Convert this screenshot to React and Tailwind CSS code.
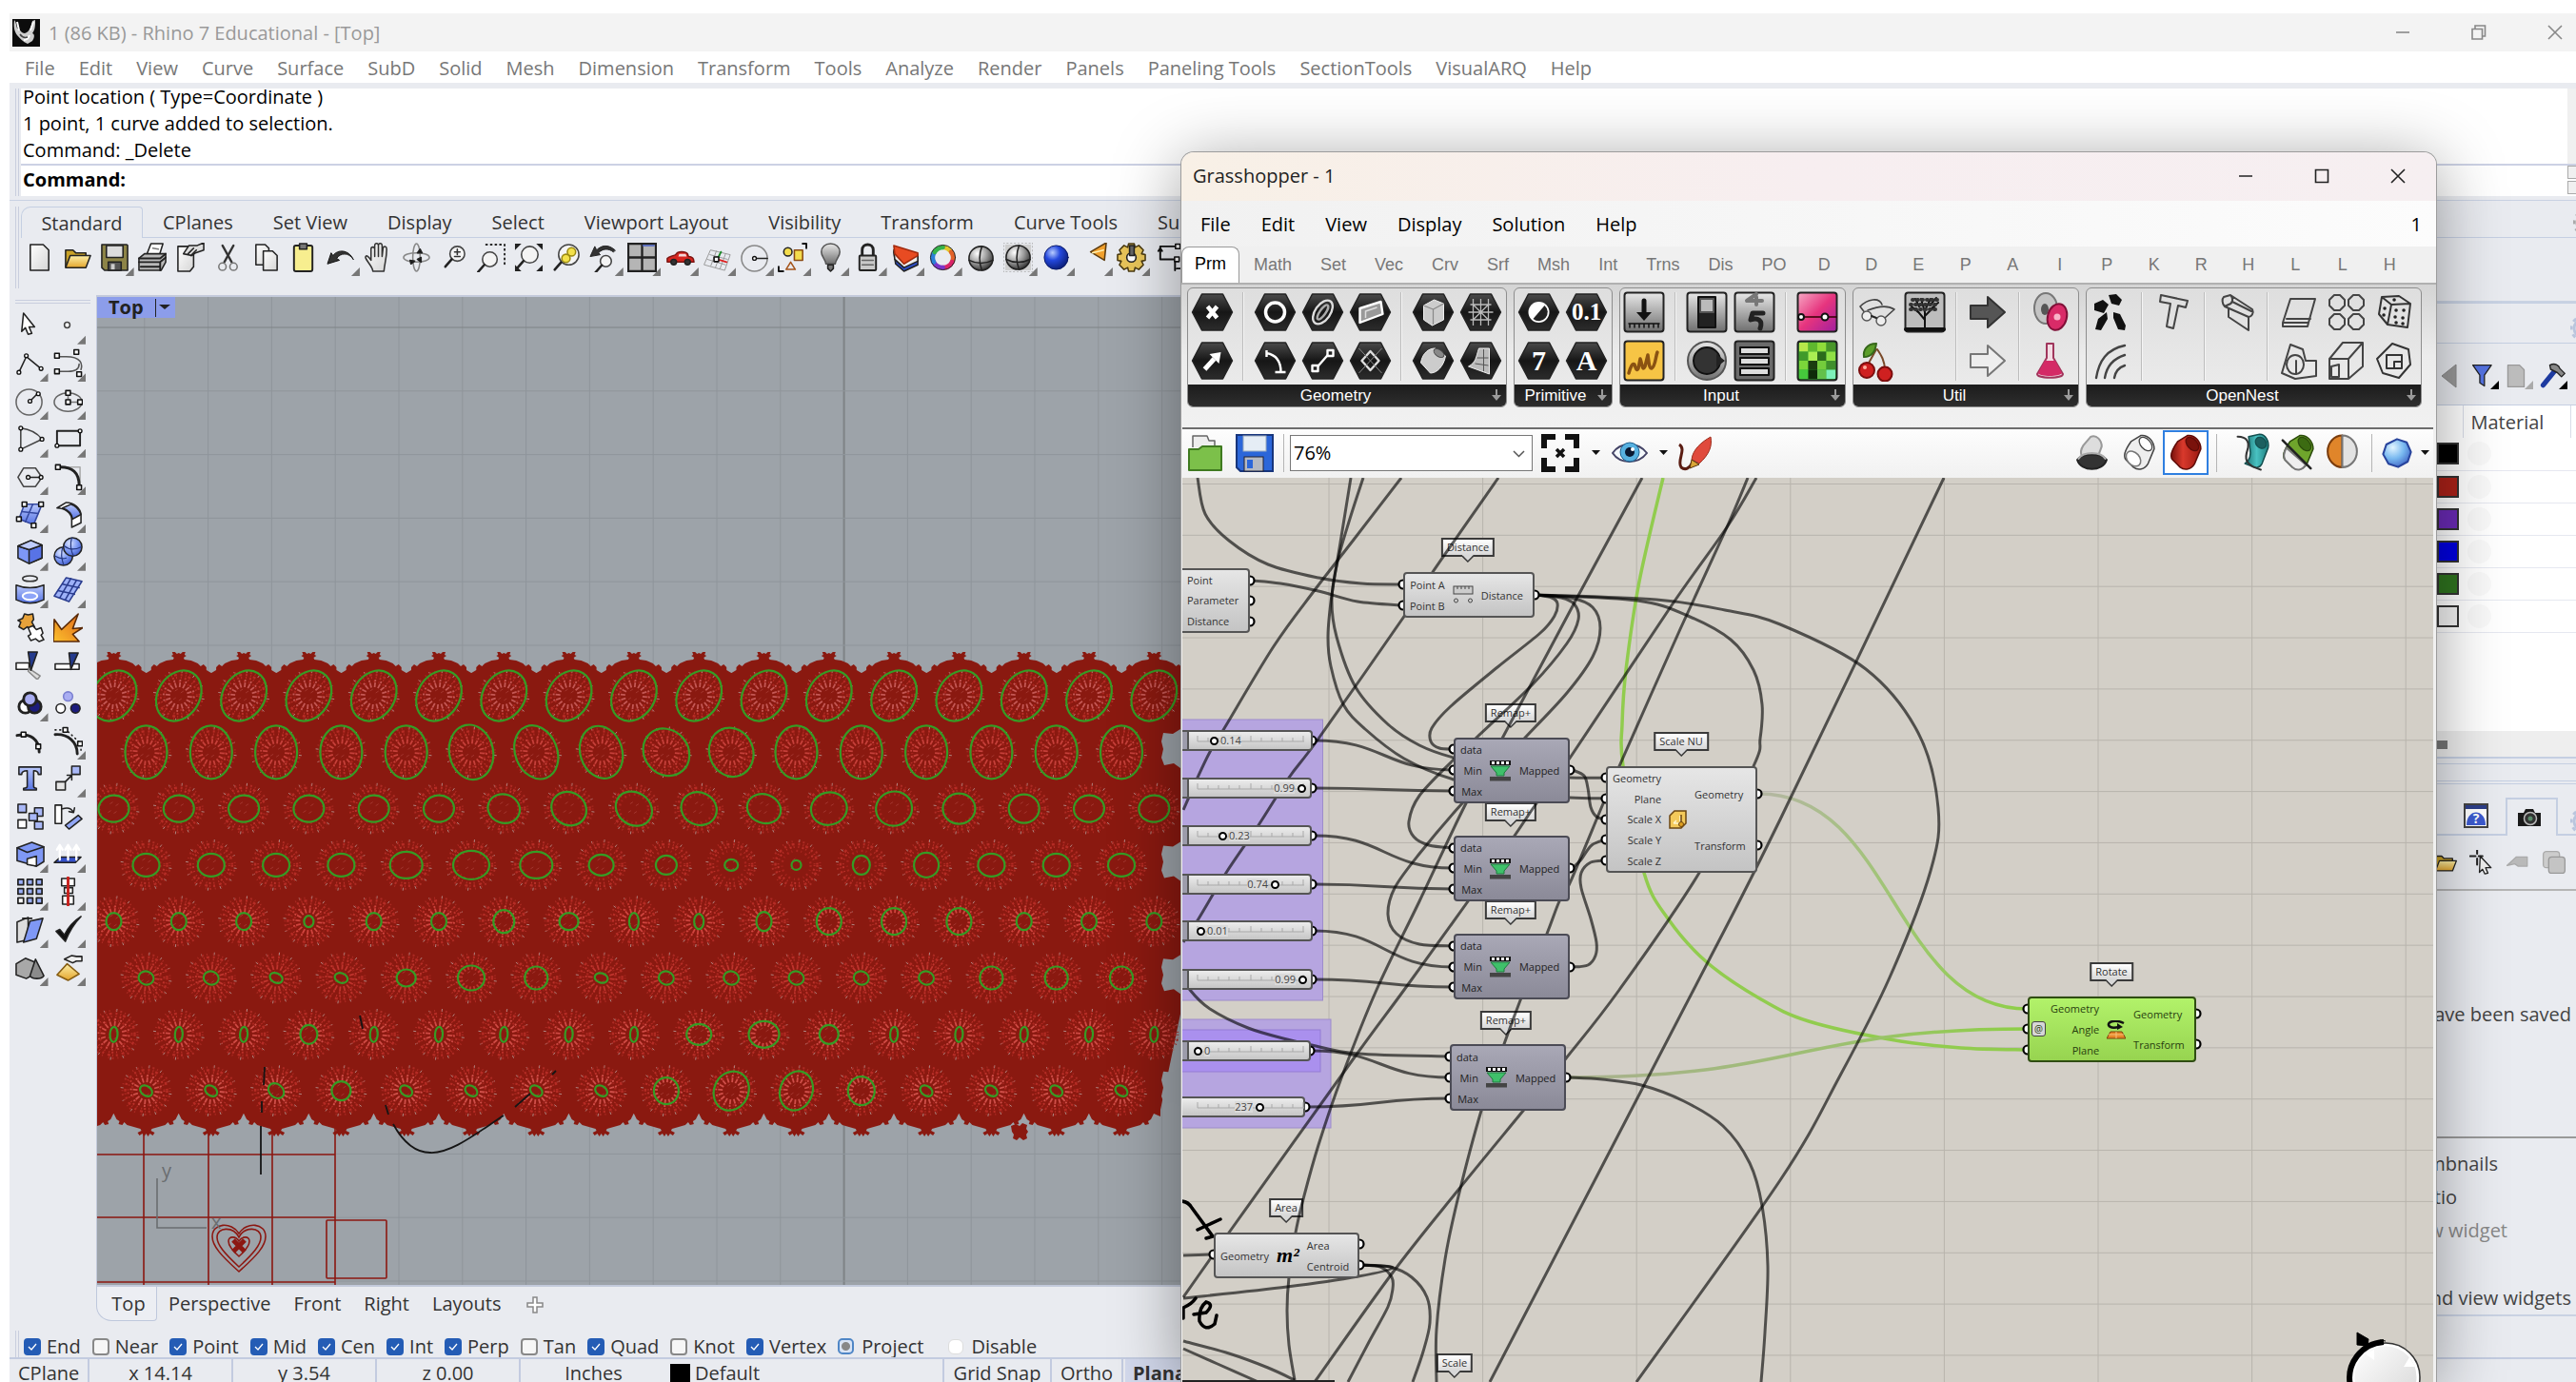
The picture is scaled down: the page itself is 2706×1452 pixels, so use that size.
import React from "react";

/* ---------- shared drawing helpers ---------- */

const smooth = (p) => {
  let d = `M${p[0][0]} ${p[0][1]}`;
  for (let i = 0; i < p.length - 1; i++) {
    const a = p[i - 1] || p[i];
    const b = p[i];
    const c = p[i + 1];
    const e = p[i + 2] || c;
    d += ` C${b[0] + (c[0] - a[0]) / 6} ${b[1] + (c[1] - a[1]) / 6} ${c[0] - (e[0] - b[0]) / 6} ${c[1] - (e[1] - b[1]) / 6} ${c[0]} ${c[1]}`;
  }
  return d;
};

const link = (x1, y1, x2, y2) => {
  const m = (x1 + x2) / 2;
  return `M${x1} ${y1} C${m} ${y1} ${m} ${y2} ${x2} ${y2}`;
};

const Svg = ({ s = 31, vb = 32, children }) => (
  <svg width={s} height={s} viewBox={`0 0 ${vb} ${vb}`} fill="none" stroke="#222" strokeWidth="1.6" strokeLinejoin="round" strokeLinecap="round" aria-hidden="true">
    {children}
  </svg>
);

const Sq = ({ x, y, f = "#fff" }) => <rect x={x - 2.5} y={y - 2.5} width="5" height="5" fill={f} stroke="#111" strokeWidth="1.6" />;
const Dot = ({ x, y }) => <circle cx={x} cy={y} r="2" fill="#fff" stroke="#111" strokeWidth="1.4" />;

const Defs = () => (
  <svg width="0" height="0" className="absolute" aria-hidden="true">
    <defs>
      <linearGradient id="gold" x1="0" y1="0" x2="0" y2="1"><stop offset="0" stopColor="#fdf0a8" /><stop offset="1" stopColor="#e3a52c" /></linearGradient>
      <linearGradient id="paper" x1="0" y1="0" x2="1" y2="1"><stop offset="0" stopColor="#fff" /><stop offset="1" stopColor="#d5d5d5" /></linearGradient>
      <linearGradient id="blue" x1="0" y1="0" x2="0" y2="1"><stop offset="0" stopColor="#b9c8fb" /><stop offset="1" stopColor="#5573e4" /></linearGradient>
      <linearGradient id="fire" x1="0" y1="1" x2="1" y2="0"><stop offset="0" stopColor="#fbc02d" /><stop offset="1" stopColor="#e0661a" /></linearGradient>
      <linearGradient id="steel" x1="0" y1="0" x2="0" y2="1"><stop offset="0" stopColor="#e8e8e8" /><stop offset="1" stopColor="#6f6f6f" /></linearGradient>
      <linearGradient id="hex" x1="0" y1="0" x2="0" y2="1"><stop offset="0" stopColor="#4a4a4a" /><stop offset=".5" stopColor="#161616" /><stop offset="1" stopColor="#2c2c2c" /></linearGradient>
      <linearGradient id="pink" x1="0" y1="0" x2="1" y2="1"><stop offset="0" stopColor="#f7a9c4" /><stop offset=".5" stopColor="#e6347e" /><stop offset="1" stopColor="#a01fa0" /></linearGradient>
      <linearGradient id="redTube" x1="0" y1="0" x2="1" y2="0"><stop offset="0" stopColor="#7a120c" /><stop offset=".4" stopColor="#d8392c" /><stop offset="1" stopColor="#9a1810" /></linearGradient>
      <linearGradient id="tealTube" x1="0" y1="0" x2="1" y2="0"><stop offset="0" stopColor="#1c7070" /><stop offset=".5" stopColor="#49c2c2" /><stop offset="1" stopColor="#1f8080" /></linearGradient>
      <radialGradient id="ball" cx=".35" cy=".3" r=".8"><stop offset="0" stopColor="#fff" /><stop offset=".5" stopColor="#9a9a9a" /><stop offset="1" stopColor="#222" /></radialGradient>
      <radialGradient id="blueBall" cx=".35" cy=".3" r=".8"><stop offset="0" stopColor="#b8ccff" /><stop offset=".4" stopColor="#2448dd" /><stop offset="1" stopColor="#071766" /></radialGradient>
      <radialGradient id="softBall" cx=".35" cy=".3" r=".8"><stop offset="0" stopColor="#dbe4ff" /><stop offset=".5" stopColor="#7f9bf5" /><stop offset="1" stopColor="#3a55c8" /></radialGradient>
      <radialGradient id="sky" cx=".35" cy=".3" r=".8"><stop offset="0" stopColor="#e3f5ff" /><stop offset=".5" stopColor="#79b9f0" /><stop offset="1" stopColor="#3a5cc0" /></radialGradient>
      <linearGradient id="wireA" x1="0" y1="0" x2="1" y2="0"><stop offset="0" stopColor="#b5b6a4" /><stop offset=".6" stopColor="#9bc86a" /><stop offset="1" stopColor="#8ecf46" /></linearGradient>
      <linearGradient id="wireB" x1="0" y1="0" x2="1" y2="0"><stop offset="0" stopColor="#a9b08f" /><stop offset=".6" stopColor="#9cc070" /><stop offset="1" stopColor="#8ecf46" /></linearGradient>
    </defs>
  </svg>
);

/* ---------- Rhino toolbar icons ---------- */

const doc = <path d="M6 2h14l6 6v22H6z" fill="url(#paper)" />;
const lens = (x, y, r) => (
  <>
    <circle cx={x} cy={y} r={r} fill="#f4f4f4" stroke="#444" />
    <path d={`M${x - r * 0.75} ${y + r * 0.75}L${x - r * 0.75 - 7} ${y + r * 0.75 + 8}`} stroke="#222" strokeWidth="2.6" />
  </>
);

const topIcons = [
  ["New", false, doc],
  ["Open", false, <><path d="M3 26V8h8l3 3h11v4" fill="#c9a227" /><path d="M3 27l5-13h22l-5 13z" fill="url(#gold)" /></>],
  ["Save", true, <><path d="M2 2h27l1 1v27H5l-3-3z" fill="#8d8447" /><rect x="7" y="3" width="18" height="13" fill="#dcdcdc" /><rect x="9" y="21" width="14" height="9" fill="#555" /><rect x="12" y="23" width="4" height="6" fill="#ccc" stroke="none" /></>],
  ["Print", false, <><path d="M9 14L14 1h13l-4 13" fill="#fff" /><path d="M1 17l6-5h23v9l-5 9H1z" fill="#b9b9b9" /><path d="M1 17h23l6-5M1 21h23v9M24 21l6-5M3 26h20" strokeWidth="2" /><path d="M16 6l6 1" stroke="#777" /></>],
  ["Properties", false, <><path d="M3 4h17v22l-4 5H3z" fill="url(#paper)" /><path d="M9 12l6-9h9l7-3v8l-9 3-4 3z" fill="#ddd" /><path d="M14 12l6-6M17 14l6-6" /></>],
  ["Cut", false, <><path d="M10 3l10 18M22 3L12 21" stroke="#333" strokeWidth="2.4" /><circle cx="10" cy="26" r="4" stroke="#777" /><circle cx="22" cy="26" r="4" stroke="#777" /></>],
  ["Copy", false, <><path d="M5 2h10l4 4v18H5z" fill="url(#paper)" /><path d="M13 9h10l5 5v16H13z" fill="url(#paper)" /></>],
  ["Paste", false, <><rect x="6" y="3" width="20" height="28" rx="2" fill="#f7ee8f" strokeWidth="2" /><path d="M12 1h8v6h-8z" fill="#777" /></>],
  ["Undo", true, <path d="M29 18C24 10 15 11 11 17l3 2-13 4 4-12 2 3c5-7 17-7 22 4z" fill="#333" stroke="#111" strokeWidth="1" />],
  ["Pan", false, <path d="M10 31c0-5-7-11-8-15 0-3 3-2 6 3V7c0-3 4-3 4 0v8V3c0-3 4-3 4 0v12V3c0-3 4-3 4 0v12l1-9c1-3 4-2 4 1 0 9-2 14-3 24z" fill="url(#paper)" stroke="#333" />],
  ["Rotate view", false, <><ellipse cx="16" cy="16" rx="14" ry="5" stroke="#888" /><ellipse cx="16" cy="16" rx="4" ry="15" stroke="#888" /><path d="M20 7l-3 4h5zM10 23l-1-4 5 1zM17 18l4 3v-5z" fill="#111" /></>],
  ["Zoom dynamic", false, <>{lens(20, 12, 8)}<path d="M17 10h6M20 7v6M17 15h6" stroke="#333" /></>],
  ["Zoom window", false, <>{lens(14, 18, 8)}<path d="M10 2h20v22" strokeWidth="2" strokeDasharray="1 4" /></>],
  ["Zoom extents", false, <>{lens(17, 13, 9)}<path d="M1 1h7L1 8zM31 1h-7l7 7zM1 31h7l-7-7zM31 31h-7l7-7z" fill="#222" stroke="none" /></>],
  ["Zoom selected", false, <>{lens(18, 13, 11)}<circle cx="21" cy="10" r="4.5" fill="#f3e14a" stroke="#9b8a10" /><circle cx="15" cy="17" r="4.5" fill="#f3e14a" stroke="#9b8a10" /></>],
  ["Undo view", true, <>{lens(18, 20, 6)}<path d="M28 8C20 1 13 3 8 8L6 4 1 15l11-2-2-2c5-5 11-5 16-1z" fill="#333" strokeWidth="1" /></>],
  ["Four viewports", true, <><rect x="1" y="1" width="30" height="30" fill="#b5b5b5" strokeWidth="2.4" /><path d="M16 1v30M1 16h30" strokeWidth="2.4" /><path d="M17 3h12" stroke="#4a61c8" /></>],
  ["Set view", true, <><path d="M2 17c3-3 8-2 10-5 1-3 10-3 12 0l1 3c4 0 6 2 6 6H2z" fill="#d6251f" stroke="#7c1512" /><path d="M15 12h7l1 3h-9z" fill="#f4d6d6" stroke="none" /><circle cx="9" cy="21" r="3" fill="#333" /><circle cx="24" cy="21" r="3" fill="#333" /></>],
  ["Set CPlane", true, <><path d="M9 8l21 5-6 17-22-6zM8 13l19 5M5 18l20 6M15 9L9 25M20 10l-6 17M25 12l-6 16" stroke="#999" strokeWidth="1" /><path d="M16 18l4-8" stroke="#1e8c2a" strokeWidth="2" /><path d="M16 18l10 3" stroke="#d22" strokeWidth="2" /><Sq x={15} y={18} /></>],
  ["Circle snap", true, <><circle cx="15" cy="17" r="14" stroke="#888" /><path d="M15 17h14" /><Dot x={15} y={17} /></>],
  ["Select", true, <><circle cx="11" cy="10" r="4.5" fill="#f3dc4d" /><rect x="18" y="8" width="9" height="11" fill="#f3dc4d" stroke="#8a4a12" /><path d="M14 21l5 8H9z" stroke="#a5541b" /><path d="M27 1h4v5M1 26v5h5" stroke="#111" strokeWidth="2" /></>],
  ["Show", true, <><path d="M16 1c-6 0-10 4-10 9s4 7 5 13h10c1-6 5-8 5-13s-4-9-10-9z" fill="url(#steel)" stroke="#555" /><path d="M13 24h6v4l-3 3-3-3z" fill="#777" /></>],
  ["Lock", true, <><path d="M10 14V8c0-8 12-8 12 0v6" strokeWidth="3" /><rect x="7" y="14" width="18" height="16" rx="1" fill="#c9c9c9" strokeWidth="2" /><path d="M10 19h12M10 24h12" stroke="#666" /></>],
  ["Layers", true, <><path d="M3 10l26 5v9L14 31 5 23z" fill="#2c4cc4" /><path d="M3 8l26 5v7l-15 7-10-9z" fill="#eee" /><path d="M3 3l26 8v3l-15 9L4 12z" fill="#e84b22" stroke="#a12a0e" /></>],
  ["Colour wheel", true, <><path d="M16 5a11 11 0 0 1 9 5" stroke="#e2c62a" strokeWidth="5" /><path d="M25 10a11 11 0 0 1 1 11" stroke="#e2622a" strokeWidth="5" /><path d="M26 21a11 11 0 0 1-10 6" stroke="#d92468" strokeWidth="5" /><path d="M16 27a11 11 0 0 1-10-6" stroke="#7a35c9" strokeWidth="5" /><path d="M6 21a11 11 0 0 1 1-11" stroke="#2b7fd8" strokeWidth="5" /><path d="M7 10a11 11 0 0 1 9-5" stroke="#35b34a" strokeWidth="5" /><circle cx="16" cy="16" r="13.5" strokeWidth="1" /></>],
  ["Shaded", false, <><circle cx="16" cy="17" r="13" fill="url(#ball)" /><path d="M3 19c8 4 18 4 26 0M17 4c-3 8-3 18 0 26" stroke="#222" /></>],
  ["Render mesh", true, <><rect x="0" y="0" width="32" height="32" fill="none" stroke="#aaa" strokeDasharray="1 3" /><rect x="2" y="2" width="28" height="28" fill="#cfcfcf" stroke="none" /><circle cx="16" cy="16" r="13" fill="url(#ball)" /><path d="M3 18c8 4 18 4 26 0M17 3c-3 8-3 18 0 26" /></>],
  ["Render", true, <circle cx="16" cy="16" r="13" fill="url(#blueBall)" stroke="#0a1a66" strokeWidth="1" />],
  ["Light", true, <><path d="M12 10L29 0l-2 19z" fill="#f1a02d" stroke="#5d3c10" /><path d="M14 11l12-3" stroke="#fff0b0" /></>],
  ["Options", true, <><path d="M13 1h6l1 4 4-2 5 5-2 4 4 1v6l-4 1 2 4-5 5-4-2-1 4h-6l-1-4-4 2-5-5 2-4-4-1v-6l4-1-2-4 5-5 4 2z" fill="#e8c55a" stroke="#4a3a10" /><circle cx="16" cy="16" r="5" fill="#fff" /><path d="M14 3h5v11h-5z" fill="#666" /></>],
  ["Dimension", false, <><path d="M6 4h16M6 4v14M6 18h18M22 18v12M24 28h8M6 6l-2 3M6 6l2 3" stroke="#111" strokeWidth="2" /><Sq x={25} y={4} /><Sq x={24} y={18} /></>],
];

const sideIcons = [
  ["Pointer", false, <path d="M9 3l12 15-6 0 3 7-4 1-3-7-4 4z" fill="#fff" stroke="#222" />],
  ["Point", true, <circle cx="15" cy="16" r="3" fill="#fff" stroke="#444" />],
  ["Polyline", true, <><path d="M4 26L12 9l16 13" /><Dot x={4} y={26} /><Dot x={12} y={8} /><Dot x={28} y={22} /></>],
  ["Curve", true, <><path d="M4 9h10c16 0 18 8 16 14M4 25h12c8 0 12-2 12-8" stroke="#555" /><Sq x={4} y={8} /><Sq x={4} y={25} /><Sq x={25} y={4} /><Sq x={28} y={28} /></>],
  ["Circle", true, <><circle cx="15" cy="17" r="14" stroke="#666" /><path d="M16 16l9-9" /><Dot x={16} y={16} /><Dot x={25} y={8} /></>],
  ["Ellipse", true, <><ellipse cx="16" cy="17" rx="15" ry="10" stroke="#666" /><path d="M16 8v9h13" stroke="#777" /><Sq x={16} y={7} /><Sq x={16} y={17} /><Sq x={29} y={17} /></>],
  ["Arc", true, <><path d="M6 5v23L29 17C22 8 14 6 6 5z" stroke="#444" /><Dot x={6} y={5} /><Dot x={6} y={28} /><Dot x={29} y={17} /></>],
  ["Rectangle", true, <><rect x="4" y="8" width="25" height="16" strokeWidth="2" /><Dot x={4} y={24} /><Dot x={29} y={8} /></>],
  ["Polygon", true, <><path d="M3 17l6-10h13l7 10-7 10H9z" stroke="#444" /><path d="M14 17h14" /><Dot x={14} y={17} /><Dot x={28} y={17} /></>],
  ["Fillet", true, <><path d="M5 6h24v22" stroke="#aaa" /><path d="M5 6c16-1 23 6 23 20" strokeWidth="3" /><Sq x={5} y={6} /><Sq x={28} y={28} /></>],
  ["Surface from points", true, <><path d="M10 5l19 0-9 22L4 21z" fill="url(#blue)" stroke="#34489f" /><path d="M7 13l18 2M19 5l-8 19" stroke="#34489f" /><Sq x={10} y={5} /><Sq x={28} y={5} /><Sq x={4} y={21} /><Sq x={20} y={28} /></>],
  ["Bend surface", true, <><path d="M4 9l10-6c8 0 16 6 16 14v8l-10 5v-8c0-8-8-13-16-13z" fill="#fff" /><path d="M10 9l9-4c6 2 9 6 11 11l-9 5c-1-6-5-10-11-12z" fill="url(#blue)" /></>],
  ["Box", true, <><path d="M3 10l14-6 12 5v14l-14 6-12-6z" fill="#7d97f7" /><path d="M3 10l12 4v15l14-6V9l-14 5" fill="#5873e6" /><path d="M3 10l14-6 12 5-14 5z" fill="#c0cdfc" /></>],
  ["Boolean union", true, <><circle cx="11" cy="21" r="10" fill="url(#softBall)" /><circle cx="21" cy="11" r="10" fill="url(#softBall)" /><path d="M12 10c5 4 12 4 18 1M20 1c-2 7-1 14 2 20M2 21c5 3 9 3 12 2M10 12c-2 6-1 12 1 18" stroke="#24377f" strokeWidth="1.2" /></>],
  ["Project curve", true, <><ellipse cx="16" cy="4" rx="8" ry="3" stroke="#333" /><path d="M1 11c10 4 20 4 30 0v16c-10 5-20 5-30 0z" fill="url(#blue)" /><ellipse cx="16" cy="23" rx="8" ry="4" fill="#8ea5f8" stroke="#fff" strokeWidth="2" /></>],
  ["Mesh", true, <><path d="M14 3l17 4-14 22L1 23z" fill="#9db1f8" stroke="#2a3c8e" /><path d="M10 10l18 4M5 17l18 4M19 4L7 25M25 6L13 27" stroke="#2a3c8e" /></>],
  ["Puzzle", false, <><path d="M3 8l5-2 2-5 4 1 5-1 1 6-2 3 3 5-5 2-3-2-4 3-5-3 2-5z" fill="#e7a23a" /><path d="M14 16l5-2 4 4 5-2 2 6-2 2 3 5-5 2-4-3-5 2-3-5 3-2z" fill="#fff" /></>],
  ["Explode", false, <path d="M0 31l1-24 8 11L27 1l-6 16 11-1-11 7 7 8z" fill="url(#fire)" stroke="#5a2a08" />],
  ["Trim", false, <><path d="M1 14h14v7H1z" fill="#fff" /><path d="M15 20l12 8-3 4-10-9z" fill="#ddd" stroke="#888" /><path d="M14 2h10l-7 20z" fill="#243a8c" /></>],
  ["Split", false, <><path d="M2 15h26v6H2z" fill="#fff" /><path d="M17 3h10l-8 18z" fill="#243a8c" /></>],
  ["Group", true, <><circle cx="11" cy="20" r="7" fill="#fff" strokeWidth="3" /><circle cx="21" cy="20" r="7" fill="#1c1c7c" strokeWidth="3" /><circle cx="16" cy="12" r="7" fill="#a9adf2" strokeWidth="3" /></>],
  ["Ungroup", false, <><circle cx="16" cy="9" r="5" fill="#a9adf2" stroke="#7a7fd0" /><circle cx="8" cy="22" r="5" fill="#fff" /><circle cx="24" cy="22" r="5" fill="#1c1c7c" /></>],
  ["Edit points", false, <><path d="M2 10c14-3 24 4 24 18" strokeWidth="3" /><Sq x={9} y={9} /><Sq x={25} y={22} /></>],
  ["Control points", true, <><path d="M2 4h12l16 15v11" strokeDasharray="1 4" /><path d="M2 9c14-1 24 8 24 21" strokeWidth="3" /><Sq x={13} y={4} /><Sq x={29} y={19} /></>],
  ["Text", false, <path d="M4 4h24v8h-3c0-3-2-4-5-4v17c0 2 2 2 3 2v2H9v-2c2 0 4 0 4-2V8c-4 0-6 1-6 4H4z" fill="url(#blue)" />],
  ["Move", true, <><rect x="20" y="3" width="9" height="9" fill="#a9b8f7" /><rect x="3" y="20" width="10" height="9" fill="#e5e5e5" /><path d="M13 20l7-7M15 13h5v5" /></>],
  ["Array copy", false, <><rect x="3" y="3" width="9" height="9" fill="#a9b8f7" /><rect x="3" y="20" width="9" height="9" fill="#fff" /><rect x="21" y="7" width="9" height="9" fill="#a9b8f7" /><rect x="15" y="13" width="9" height="8" fill="#a9b8f7" /><rect x="21" y="22" width="9" height="8" fill="#a9b8f7" /></>],
  ["Rotate", false, <><path d="M2 4h7v20H2z" fill="#fff" /><path d="M10 8c6-2 10 0 12 4M22 12l1-5M22 12l-5-1" /><path d="M13 26l14-11 4 4-14 11z" fill="#91a6f5" /></>],
  ["Solid edit", true, <><path d="M2 9L18 3l13 5v16l-8 5-21-6z" fill="#7f98f5" /><path d="M2 9l11 5 18-6" /><path d="M13 21l10-3v11l-10-2z" fill="#fff" /></>],
  ["Extrude", true, <><path d="M1 25l7-6h22l-6 6z" fill="#3450c9" /><path d="M7 22V8M16 22V8M25 22V8M4 11l3-5 3 5M13 11l3-5 3 5M22 11l3-5 3 5" stroke="#fff" strokeWidth="2.4" /></>],
  ["Array", true, <>{[3, 13, 23].map((x) => [4, 14, 24].map((y) => <rect key={x + "-" + y} x={x} y={y - 1} width="6" height="6" fill={y === 24 && x === 3 ? "#fff" : "#9aaef7"} strokeWidth="1.8" />))}</>],
  ["Align", true, <><rect x="9" y="2" width="14" height="8" fill="#fff" /><rect x="12" y="12" width="9" height="6" fill="#fff" /><rect x="10" y="21" width="12" height="9" fill="#fff" /><path d="M16 1v30" stroke="#c8201c" strokeWidth="3" /></>],
  ["Flow", true, <><path d="M2 8l12-5v24L2 30z" fill="#ddd" /><path d="M16 7l14-3-7 22-14 4z" fill="#7f98f5" /><path d="M8 4h10" /></>],
  ["Check", true, <path d="M3 18l4-2 5 6C17 12 22 7 30 2 22 10 17 19 13 29z" fill="#111" />],
  ["Solids", true, <><path d="M1 12l10-6 10 4v13l-9 5-11-4z" fill="#a8a8a8" /><path d="M22 7l9 18c-3 4-12 4-15 0z" fill="#8b8b8b" /></>],
  ["Render tools", true, <><path d="M4 24L15 12l13 11-12 7z" fill="url(#gold)" stroke="#855c12" /><path d="M12 7l8-4 5 1h6v5h-6l-4 2z" fill="#eee" /></>],
];

const Corner = ({ cls = "bg-[#777]" }) => <span className={`absolute bottom-0 right-0 size-[9px] [clip-path:polygon(100%_0,100%_100%,0_100%)] ${cls}`} />;

const ToolButton = ({ item, className }) => (
  <button type="button" aria-label={item[0]} className={`relative flex items-center justify-center ${className}`}>
    <Svg>{item[2]}</Svg>
    {item[1] && <Corner />}
  </button>
);

/* ---------- Rhino viewport ---------- */

const RED = "#8a1910";
const PITCH = 68.3;

const rowSpecs = [
  { e: [22, 28, 32] },
  { e: [22, 28, 0], o: { 5: [23, 29, -12], 6: [22, 29, -22], 7: [22, 28, -18], 8: [23, 26, -40], 9: [23, 26, -20] } },
  { e: [16, 14, -5], o: { 6: [17, 15, 20], 7: [19, 17, 35], 8: [20, 17, 35], 9: [19, 17, 25], 10: [18, 15, 20], 11: [19, 17, -15], 12: [19, 18, -15], 13: [17, 16, 0], 14: [16, 15, 0] } },
  { e: [14, 12, 0], o: { 4: [17, 14, 0], 5: [19, 15, 0], 6: [17, 14, 0], 7: [13, 11, 0], 8: [11, 10, 0], 9: [7, 6, 0], 10: [5, 5, 0], 11: [9, 10, 0], 12: [13, 13, 0] } },
  { e: [8, 9, 0], o: { 3: [5, 6, 0], 6: [11, 12, 0], 7: [10, 9, 0], 8: [5, 9, 0], 9: [5, 8, 0], 10: [8, 10, 0], 11: [13, 14, 0], 12: [13, 14, 0], 13: [13, 14, 0] } },
  { e: [8, 7, 20], o: { 2: [7, 5, 25], 3: [7, 5, 20], 4: [10, 9, 0], 5: [14, 13, 0], 6: [12, 12, 0], 7: [7, 5, 15], 13: [12, 12, 0], 14: [12, 12, 0], 15: [12, 12, 0] } },
  { e: [4, 8, 3], o: { 3: [9, 10, 0], 9: [13, 11, 0], 10: [16, 14, 0], 11: [10, 10, 0] } },
  { e: [7, 5, 35], o: { 2: [9, 7, 40], 3: [10, 10, 0], 8: [13, 14, 0], 9: [18, 21, 25], 10: [17, 21, 20], 11: [14, 15, 0] } },
];

const topEdge = [[-34, 706], [-29, 703], [-29, 700], [-26, 697], [-23, 699], [-20, 696], [-13, 693], [-6, 692], [-5, 690], [-8, 688], [-6, 687], [-7, 684], [-4, 684], [-2, 686], [0, 685], [2, 686], [4, 684], [7, 684], [6, 687], [8, 688], [5, 690], [6, 692], [13, 693], [20, 696], [23, 699], [26, 697], [29, 700], [29, 703], [34, 706]];
const bottomEdge = [[34, 1169], [31, 1175], [28, 1177], [29, 1180], [25, 1181], [23, 1178], [20, 1181], [13, 1183], [6, 1185], [5, 1187], [9, 1189], [7, 1192], [4, 1190], [2, 1193], [0, 1190], [-2, 1193], [-4, 1190], [-7, 1192], [-9, 1189], [-5, 1187], [-6, 1185], [-13, 1183], [-20, 1181], [-23, 1178], [-25, 1181], [-29, 1180], [-28, 1177], [-31, 1175], [-34, 1169]];

const outline = () => {
  let d = "";
  for (let i = -1; i < 18; i++) {
    const c = 119.5 + i * PITCH;
    d += topEdge.map((p, k) => `${i === -1 && k === 0 ? "M" : "L"}${c + p[0]} ${p[1]}`).join("");
  }
  for (let i = 15; i >= -1; i--) {
    const c = 153.5 + i * PITCH;
    const right = i === 15 ? [[41, 1165], [41, 1172]] : [];
    d += [...right, ...bottomEdge].map((p) => `L${c + p[0]} ${p[1]}`).join("");
  }
  return d + "Z";
};

const rays = (n, r1, r2) =>
  Array.from({ length: n }, (_, i) => {
    const a = ((i + 0.25) * 2 * Math.PI) / n;
    return `M${(Math.cos(a) * r1).toFixed(1)} ${(Math.sin(a) * r1).toFixed(1)}L${(Math.cos(a) * r2).toFixed(1)} ${(Math.sin(a) * r2).toFixed(1)}`;
  }).join("");

const petals = rays(16, 9, 17);
const fringe = rays(12, 24, 27);

const Flower = ({ x, y, e, bright }) => (
  <g transform={`translate(${x} ${y})`} fill="none">
    <path d={fringe} stroke="#b08682" strokeWidth="1" />
    <circle r="25" stroke="#ad2b24" strokeWidth="2" strokeDasharray="1 4 2 3 1 6" />
    <circle r="22" stroke="#b52c25" strokeWidth="2.4" strokeDasharray="2 3 1 2 3 4" />
    <circle r="19" stroke="#bb312a" strokeWidth="2" strokeDasharray="1 3 2 2 1 4" />
    <circle r="15" stroke="#a8251e" strokeWidth="2.4" strokeDasharray="2 3 1 4" />
    {bright && <path d={petals} stroke={bright} strokeWidth="1.8" strokeDasharray="5 1 2 1" />}
    <path d="M-6 4L-3 2M-4-5l3-2M2-3l3-2M0 5l3-2" stroke="#a3362f" strokeWidth="1" />
    <ellipse rx={e[0]} ry={e[1]} transform={`rotate(${e[2]})`} stroke="#359c25" strokeWidth="2.2" />
  </g>
);

const range = (n) => Array.from({ length: n }, (_, i) => i);
const petalColors = ["#c45754", "#c6403a", null, null, "#cf443e", "#bf342d", "#cf4a44", "#cf4f49"];

const Viewport = () => (
  <svg className="absolute left-0 top-0" width="1160" height="1041" viewBox="102 311 1160 1041" aria-label="Top view drawing">
    {range(17).map((i) => (
      <path key={"v" + i} d={`M${151.8 + i * 66.8} 311V1352`} stroke={i === 11 ? "#7f8386" : "#8f959b"} strokeWidth={i === 11 ? 2 : 1} />
    ))}
    {range(16).map((i) => (
      <path key={"h" + i} d={`M102 ${343 + i * 66.8}H1262`} stroke={i === 0 ? "#7f8386" : "#8f959b"} strokeWidth="1" />
    ))}
    <path d="M1150 1144.6H1262" stroke="#8e4a4a" strokeWidth="2" />
    <g stroke="#8c1812" strokeWidth="1.6" fill="none">
      <path d="M151 1170V1352M219 1170V1352M286 1170V1352M352 1170V1352M102 1212H352M102 1278H352M102 1346H352" />
      <rect x="343" y="1281" width="63" height="61" rx="1" />
      <path d="M251 1335C232 1318 223 1308 223 1298C223 1284 243 1282 251 1295C259 1282 279 1284 279 1298C279 1308 270 1318 251 1335Z" />
      <path d="M251 1330C236 1316 228 1307 228 1299C228 1288 245 1287 251 1299C257 1287 274 1288 274 1299C274 1307 266 1316 251 1330Z" />
      <path d="M251 1319C242 1311 240 1307 240 1303C240 1297 248 1298 251 1303C254 1298 262 1297 262 1303C262 1307 260 1311 251 1319Z" />
      <path d="M245 1302l12 12M257 1302l-12 12" strokeWidth="5" />
    </g>
    <path d={outline()} fill={RED} />
    <path d="M1062 1182l5-2 4 2 3-3 5 2-1 4 2 3-2 3 1 4-4 2-4-3-3 3-4-2 1-4-2-3z" fill={RED} />
    {[1, 3, 5, 7].map((r) => (
      <path key={r} d={`M1262 ${765 + (r - 1) * 59.3}l-22 0-8 5-10-1-2 9 2 8-2 9 3 8 10-2 7 5 22 0z`} fill="#9ca2a8" />
    ))}
    {rowSpecs.map((row, r) =>
      range(r % 2 ? 16 : 17).map((c) => (
        <Flower key={r + "-" + c} x={(r % 2 ? 153.5 : 119.5) + c * PITCH} y={730 + r * 59.3} e={(row.o && row.o[c]) || row.e} bright={petalColors[r]} />
      ))
    )}
    <g stroke="#151515" fill="none" strokeWidth="1.8">
      <path d="M274 1182V1233M275 1168V1156M277 1139L278 1120M378 1066l3 14M405 1160l3 10M541 1162l16-14M580 1128l4-4" />
      <path d="M413 1180C424 1200 436 1210 452 1210C474 1211 500 1190 529 1171" />
    </g>
    <path d="M165 1237V1289H217" stroke="#6a6d70" strokeWidth="1.6" fill="none" />
    <g fill="#6a6d70" className="font-['Open_Sans',sans-serif] text-[20px]">
      <text x="170" y="1236">y</text>
      <text x="222" y="1290">x</text>
    </g>
  </svg>
);

/* ---------- Grasshopper ribbon ---------- */

const Hex = ({ children }) => (
  <svg width="45" height="40" viewBox="-22 -20 44 40" fill="none" stroke="#fff" strokeWidth="2.4" strokeLinejoin="round" aria-hidden="true">
    <path d="M-21 0L-11-19H11L21 0 11 19H-11Z" fill="url(#hex)" stroke="#222" strokeWidth="1.5" />
    {children}
  </svg>
);

const Tile = ({ fill = "url(#steel)", children }) => (
  <svg width="44" height="44" viewBox="-22 -22 44 44" fill="none" stroke="#111" strokeWidth="2" strokeLinejoin="round" strokeLinecap="round" aria-hidden="true">
    <rect x="-20.5" y="-20.5" width="41" height="41" rx="3" fill={fill} stroke="#222" />
    {children}
  </svg>
);

const Free = ({ children }) => (
  <svg width="44" height="44" viewBox="-22 -22 44 44" fill="none" stroke="#222" strokeWidth="2" strokeLinejoin="round" strokeLinecap="round" aria-hidden="true">
    {children}
  </svg>
);

const HexText = ({ t, size }) => (
  <text x="0" y={size / 3} textAnchor="middle" fill="#fff" stroke="none" fontFamily="Liberation Serif, serif" fontWeight="bold" fontSize={size}>{t}</text>
);

const checker = ["#b6e84a", "#5fb82e", "#8fdc3a", "#49962a", "#3f9a2a", "#a9ee52", "#2c6b1c", "#90e045", "#7bd63a", "#1b3d10", "#74cc3c", "#3f8f2c", "#45c83c", "#0f2a0a", "#63c04a", "#7df0b8"];

const ribbon = [
  ["Geometry", "w-[336px]", [
    [["Point", <Hex><path d="M-5-6L5 6M5-6L-5 6" strokeWidth="4.5" /></Hex>], ["Vector", <Hex><path d="M-8 9L2-2" strokeWidth="5" /><path d="M-3-7L9-9 7 3Z" fill="#fff" stroke="none" /></Hex>]],
    [["Circle", <Hex><circle r="10" strokeWidth="3.5" /></Hex>], ["Circular arc", <Hex><path d="M-9-8C2-6 6 2 6 12M-9-11v7M0 12h11" /></Hex>],
      ["Curve", <Hex><ellipse rx="8" ry="14" transform="rotate(35)" stroke="#ddd" /><ellipse rx="3" ry="9" transform="rotate(35)" stroke="#aaa" /></Hex>], ["Line", <Hex><path d="M-7 8L7-8" /><rect x="-11" y="5" width="6" height="6" fill="#222" /><rect x="5" y="-11" width="6" height="6" fill="#222" /></Hex>],
      ["Plane", <Hex><path d="M-11 11V-4L11-11 13 2Z" fill="#999" /><path d="M-5 6v-7l12-4" stroke="#ddd" strokeWidth="1.5" /></Hex>], ["Rectangle", <Hex><path d="M0-10L9 0 0 10-9 0Z" stroke="#ddd" /><path d="M-12-13L12 13M12-13L-12 13" stroke="#888" strokeWidth="1" /></Hex>]],
    [["Box", <Hex><path d="M-10-7L1-13 11-9V8L-1 14-10 8Z" fill="#ccc" stroke="#eee" strokeWidth="1" /><path d="M-10-7L0-3 11-9M0-3V13" stroke="#888" strokeWidth="1.2" /></Hex>], ["Brep", <Hex><path d="M-13 2C-11-9-4-13 2-13L13-5C11 6 4 13-3 13Z" fill="#ccc" stroke="#eee" strokeWidth="1" /><ellipse cx="6" cy="-8" rx="6" ry="3.5" fill="#888" stroke="#444" strokeWidth="1" transform="rotate(35 6 -8)" /></Hex>],
      ["Mesh", <Hex><path d="M-11-8h22M-13 0h26M-11 8h22M-8-14v28M0-14v28M8-14v28M-8-8L8 8M8-8L-8 8" stroke="#bbb" strokeWidth="1.3" /></Hex>], ["Surface", <Hex><path d="M-2-13H9V14L-13 6C-5 2-5-4-2-13Z" fill="#bbb" stroke="#eee" strokeWidth="1" /><path d="M3-12V11M-4-3H8M-6 3L8 5" stroke="#555" strokeWidth="1" /></Hex>]],
  ]],
  ["Primitive", "w-[104px]", [
    [["Boolean", <Hex><circle r="11" fill="#fff" stroke="none" /><path d="M6-7A9 9 0 0 1-6 7Z" fill="#222" stroke="none" /></Hex>], ["Integer", <Hex><HexText t="7" size={30} /></Hex>],
      ["Number", <Hex><HexText t="0.1" size={25} /></Hex>], ["Text", <Hex><HexText t="A" size={30} /></Hex>]],
  ]],
  ["Input", "w-[238px]", [
    [["Button", <Tile><path d="M0-12V2" strokeWidth="5" /><path d="M-8 0H8L0 9Z" fill="#111" stroke="none" /><path d="M-16 12h32M-15 16v-3M-10 16v-3M-5 16v-3M0 16v-3M5 16v-3M10 16v-3M15 16v-3" strokeWidth="1.5" /></Tile>], ["Scribble", <Tile fill="#f6c445"><path d="M-16 13C-14 6-12 2-10 4-9 7-8 12-6 8L-4-2C-2 2-2 12 1 6L4-6C5 0 5 8 8 8 12 6 12-4 14-9" stroke="#8a5212" strokeWidth="3.5" /></Tile>]],
    [["Toggle", <Tile><rect x="-9" y="-16" width="18" height="32" fill="#222" /><rect x="-7" y="-14" width="14" height="14" fill="#bbb" stroke="#555" /></Tile>], ["Knob", <Free><circle r="20" fill="url(#steel)" stroke="#555" /><circle r="14" fill="#333" stroke="#111" /><path d="M10-7L19 0 10 7Z" fill="#222" stroke="none" /></Free>],
      ["Digit scroller", <Tile><path d="M2-19L-8-12H8M2-16v8" stroke="#777" strokeWidth="4" /><path d="M9 1H-2L-4 8C4 5 9 9 6 17" stroke="#222" strokeWidth="5" /></Tile>], ["Panel", <Tile fill="#6b6b6b"><rect x="-15" y="-14" width="30" height="7" fill="#ddd" /><rect x="-15" y="-3" width="30" height="7" fill="#ddd" /><rect x="-15" y="8" width="30" height="7" fill="#ddd" /></Tile>]],
    [["Gradient", <Tile fill="url(#pink)"><path d="M-20 5H20" stroke="#300" strokeWidth="1.6" /><circle cx="-17" cy="5" r="3" fill="#fff" /><circle cx="8" cy="5" r="3.5" fill="#fff" /></Tile>], ["Swatch", <Tile fill="#3a3">{checker.map((c, i) => <rect key={i} x={-19 + (i % 4) * 9.5} y={-19 + Math.floor(i / 4) * 9.5} width="9.5" height="9.5" fill={c} stroke="none" />)}</Tile>]],
  ]],
  ["Util", "w-[238px]", [
    [["Viewer", <Free><path d="M-18-6C-10-14 2-16 5-8M-18-6L-12 2M-10-2C0-6 10-8 18-3L8 6" stroke="#444" strokeWidth="1.6" /><ellipse cx="-11" cy="4" rx="5" ry="5" fill="#eee" stroke="#555" strokeWidth="1.4" /><ellipse cx="4" cy="9" rx="5" ry="5" fill="#eee" stroke="#555" strokeWidth="1.4" /><path d="M-6 4l5 2" /></Free>], ["Cherry picker", <Free><path d="M-1-12L-11 6M0-12C4-6 8 0 8 10" stroke="#7a4a2a" /><path d="M-1-18C-12-18-15-10-14-4-5-4-2-10-1-18Z" fill="#5c9e2a" stroke="#35661a" /><circle cx="-11" cy="10" r="8" fill="#cf2020" stroke="#7c0d0d" /><circle cx="8" cy="14" r="7.5" fill="#cf2020" stroke="#7c0d0d" /><circle cx="-13" cy="7" r="2" fill="#ffb0a0" stroke="none" /></Free>],
      ["Param viewer", <Tile fill="#bdbdbd"><path d="M0 18V0M0 8L-10-4M0 4L10-6M0 0L-4-14M0-2L6-14M-7 0L-14-6M7-4L14-10M-6-6L-10-14M6-8L12-15" strokeWidth="2" /><path d="M-20 18H20" strokeWidth="4" /><path d="M-15-8h30M-13-13h26M-15-3h28" stroke="#333" strokeWidth="4" strokeDasharray="1 4" /></Tile>], null],
    [["Data output", <Free><path d="M-18-7H0V-16L18 0 0 16V7H-18Z" fill="#555" stroke="#333" /></Free>], ["Data input", <Free><path d="M-18-7H0V-16L18 0 0 16V7H-18Z" fill="#eee" stroke="#777" /></Free>]],
    [["Cluster", <Free><ellipse cx="-5" cy="-4" rx="12" ry="16" fill="#c4c4c4" stroke="#777" /><ellipse cx="-6" cy="-3" rx="4" ry="6" fill="#555" stroke="none" /><ellipse cx="7" cy="5" rx="10" ry="14" fill="#d92b68" stroke="#801038" transform="rotate(15 7 5)" /><circle cx="7" cy="5" r="3.5" fill="#f9b3c8" stroke="none" /></Free>], ["Galapagos", <Free><path d="M-4-18H3V-3L13 14C13 19-14 19-14 14L-4-3Z" fill="#f3dbe3" stroke="#a0365c" /><path d="M-6 0H5L12 13C10 17-12 17-13 13Z" fill="#d42a66" stroke="none" /></Free>]],
  ]],
  ["OpenNest", "w-[353px]", [
    [["Nest", <Free><path d="M-2-18l8-1 6 6-3 6-8-2zM-17-9l9-4 6 5-5 9-10-3zM-16 18l3-11 9-7 1 7-7 12zM3 0l7 2 6 12-1 5-7-1-5-12z" fill="#111" stroke="none" /></Free>], ["Gradient rings", <Free><path d="M-15 18C-12 0-4-12 15-16M-6 18C-4 6 2-2 15-6M4 18C5 12 9 7 15 5" stroke="#444" strokeWidth="2.4" /></Free>]],
    [["Text", <Free><path d="M-13-18L15-12 13-5 5-7 0 17-7 15-3-9-14-11Z" stroke="#444" /></Free>], null],
    [["Unroll", <Free><path d="M-13-16L-6-18 17-3C19 1 16 5 13 5L-12-6C-15-9-15-14-13-16ZM-6-18C-2-14-4-9-8-8L-12-6M-4-11L16-1M13 5V19L-8 5V-4" stroke="#444" /></Free>], null],
    [["Sheet", <Free><path d="M-9-14H17L10 11H-17ZM-17 11V15H9L10 11M-13 7H12" stroke="#444" /></Free>], ["Nested parts", <Free><path d="M-9-17L4-12 7 0H18V16L-4 19-18 13ZM-3 14V0" stroke="#444" /><ellipse cx="-4" cy="4" rx="9" ry="10" stroke="#444" /></Free>],
      ["Hex group", <Free>{[[-10, -10], [10, -10], [-10, 10], [10, 10]].map(([x, y]) => <path key={x + "," + y} d={`M${x - 3} ${y - 8}h6l5 5v6l-5 5h-6l-5-5v-6z`} stroke="#444" />)}</Free>], ["Box parts", <Free><path d="M-18-2L-4-19H17V6L2 19H-18ZM-18-2H2L17-19M2-2V19M-16 17V6L-8 4V17Z" stroke="#444" /></Free>],
      ["Dice", <Free><path d="M-13-16L5-17 17-9 14 16-7 13-16 2ZM-13-16L-3-8 17-9M-3-8L-7 13" stroke="#333" /><path d="M2-2h.1M10-2h.1M1 5h.1M9 6h.1M0-13h.1M-10-4h.1M-11 3h.1M2 11h.1M9 12h.1" strokeWidth="3.5" /></Free>], ["Spiral", <Free><path d="M-2-18L15-12 17 4 5 18-12 13-18-2Z" stroke="#333" /><path d="M-8-6H8V8H-8ZM0 8V1H8" stroke="#333" /></Free>]],
  ]],
];

const RibbonPanel = ({ name, width, groups }) => (
  <section aria-label={name} className={`flex h-[126px] shrink-0 flex-col overflow-hidden rounded-[6px] border border-[#8d8d8d] bg-gradient-to-b from-[#dedede] to-[#ededed] ${width}`}>
    <div className="flex flex-1 items-stretch">
      {groups.map((g, i) => (
        <React.Fragment key={i}>
          {i > 0 && <span className="mx-[7px] my-1 w-[2px] border-l border-[#bdbdbd] bg-[#f4f4f4]" />}
          <div className="grid grid-flow-col grid-rows-2">
            {g.map((b, k) =>
              b ? (
                <button key={k} type="button" aria-label={b[0]} className="flex h-[50px] w-[50px] items-center justify-center">{b[1]}</button>
              ) : (
                <span key={k} className="h-[50px] w-[50px]" />
              )
            )}
          </div>
        </React.Fragment>
      ))}
    </div>
    <div className="relative flex h-[23px] items-center justify-center bg-gradient-to-b from-[#1c1c1c] to-[#2e2e2e] text-[17px] leading-none text-white">
      <span className={name === "Primitive" ? "pr-4" : "pr-6"}>{name}</span>
      <svg className="absolute right-[4px] top-[5px]" width="12" height="14" viewBox="0 0 12 14" aria-hidden="true"><path d="M5 0h2v6h4L6 12 1 6h4z" fill="#9a9a9a" /></svg>
    </div>
  </section>
);

/* ---------- Grasshopper canvas ---------- */

const OX = 1242;
const OY = 502;

const wires = [
  [[1258, 502], [1266, 540], [1291, 568], [1332, 593], [1385, 607], [1430, 613], [1474, 614]],
  [[1316, 610], [1345, 613], [1385, 621], [1426, 632], [1474, 636]],
  [[1419, 502], [1408, 570], [1399, 625], [1395, 668], [1398, 700], [1411, 740], [1434, 766], [1475, 797], [1527, 819], [1600, 835], [1649, 838], [1687, 839]],
  [[1432, 502], [1418, 545], [1405, 590], [1399, 630], [1404, 669], [1424, 722], [1458, 761], [1491, 783], [1527, 796], [1600, 812], [1649, 817], [1687, 817]],
  [[1472, 502], [1422, 567], [1381, 620], [1338, 679], [1285, 767], [1271, 790], [1258, 817], [1243, 851]],
  [[1574, 502], [1505, 601], [1474, 649], [1385, 776], [1354, 817], [1322, 867], [1288, 917], [1258, 967], [1243, 990]],
  [[1725, 502], [1654, 633], [1579, 774], [1540, 844], [1491, 947], [1446, 1040], [1410, 1130], [1385, 1203], [1369, 1260], [1361, 1295], [1354, 1342], [1352, 1377], [1354, 1413], [1360, 1450]],
  [[1845, 502], [1814, 554], [1756, 636], [1650, 795], [1614, 844], [1591, 878], [1542, 947], [1475, 1040], [1422, 1112], [1291, 1295], [1271, 1323], [1243, 1363]],
  [[1836, 502], [1814, 554], [1765, 661], [1701, 805], [1685, 842], [1649, 928], [1638, 947], [1625, 981], [1597, 1051], [1580, 1097], [1556, 1167], [1532, 1257], [1518, 1323], [1509, 1397], [1509, 1452]],
  [[1614, 625], [1630, 628], [1636, 634], [1633, 647], [1618, 665], [1573, 701], [1524, 742], [1504, 765], [1503, 779], [1512, 786], [1527, 787]],
  [[1614, 625], [1640, 628], [1654, 635], [1658, 651], [1646, 676], [1610, 719], [1552, 774], [1526, 799], [1491, 836], [1480, 863], [1485, 879], [1501, 888], [1527, 891]],
  [[1614, 625], [1650, 628], [1673, 638], [1681, 660], [1673, 690], [1646, 728], [1603, 774], [1536, 844], [1491, 897], [1465, 933], [1458, 961], [1467, 981], [1491, 992], [1527, 994]],
  [[1614, 625], [1720, 631], [1773, 647], [1818, 672], [1842, 704], [1851, 740], [1849, 776], [1842, 805], [1785, 917], [1701, 1040], [1645, 1112], [1600, 1167], [1532, 1250], [1463, 1337], [1381, 1452]],
  [[1614, 625], [1740, 630], [1812, 641], [1870, 656], [1960, 703], [2015, 770], [2036, 849], [2028, 915], [1985, 1027], [1933, 1130], [1870, 1240], [1719, 1452]],
  [[2042, 502], [1870, 861], [1779, 1040], [1565, 1452]],
  [[1648, 1132], [1683, 1134], [1724, 1140], [1769, 1157], [1810, 1183], [1838, 1222], [1851, 1267], [1857, 1330], [1854, 1400], [1850, 1452]],
  [[1652, 809], [1664, 815], [1668, 828], [1671, 848], [1677, 858], [1687, 861]],
  [[1652, 912], [1661, 903], [1672, 888], [1687, 882]],
  [[1652, 1016], [1668, 1014], [1676, 1004], [1677, 990], [1671, 965], [1661, 933], [1661, 917], [1671, 906], [1687, 904]],
  [[1243, 1025], [1250, 1040], [1271, 1060], [1311, 1080], [1352, 1092], [1378, 1098], [1426, 1107], [1523, 1110]],
  [[1243, 1319], [1275, 1318]],
  [[1430, 1329], [1450, 1331], [1462, 1342], [1463, 1354], [1458, 1373], [1438, 1410], [1416, 1452]],
  [[1430, 1329], [1460, 1331], [1483, 1342], [1499, 1363], [1502, 1390], [1495, 1420], [1484, 1452]],
  [[1430, 1329], [1463, 1332], [1427, 1341], [1352, 1352], [1243, 1364]],
  [[1243, 1409], [1291, 1422], [1332, 1437], [1360, 1450]],
  [[1243, 1417], [1279, 1433], [1322, 1452]],
];

const sliderLinks = [[1381, 778, 1527, 809], [1381, 828, 1527, 831], [1381, 878, 1527, 912], [1381, 929, 1527, 934], [1381, 978, 1527, 1016], [1381, 1029, 1527, 1037], [1378, 1104, 1523, 1132], [1373, 1163, 1523, 1154]];

const greenWire = [[1747, 502], [1722, 611], [1708, 704], [1704, 761], [1705, 805], [1727, 917], [1752, 965], [1793, 1011], [1850, 1050], [1900, 1073], [1985, 1092], [2060, 1101], [2130, 1103]];

const ports = [
  [1313, 610], [1313, 631], [1313, 653], [1474, 614], [1474, 636], [1612, 625],
  [1527, 787], [1527, 809], [1527, 831], [1649, 809], [1527, 891], [1527, 912], [1527, 934], [1649, 912], [1527, 994], [1527, 1016], [1527, 1037], [1649, 1016],
  [1523, 1110], [1523, 1132], [1523, 1154], [1645, 1132],
  [1687, 817], [1687, 839], [1687, 861], [1687, 882], [1687, 904], [1846, 834], [1846, 888],
  [1275, 1318], [1428, 1307], [1428, 1329],
  [2130, 1060], [2130, 1081], [2130, 1103], [2307, 1065], [2307, 1097],
  [1378, 778], [1378, 828], [1378, 878], [1378, 929], [1378, 978], [1378, 1029], [1376, 1104], [1371, 1163],
];

const RemapIcon = (
  <svg width="23" height="22" viewBox="0 0 23 22" aria-hidden="true">
    <rect x="0" y="0" width="22" height="5" fill="#111" /><path d="M2 1h3v3H2zM7 1h3v3H7zM12 1h3v3h-3zM17 1h3v3h-3z" fill="#fff" />
    <path d="M1 6h20l-6 7v3H7v-3z" fill="#3fc06a" stroke="#1f7a3c" /><rect x="0" y="17" width="22" height="4.500" fill="#444" />
  </svg>
);
const DistanceIcon = (
  <svg width="22" height="20" viewBox="0 0 22 20" fill="none" stroke="#444" aria-hidden="true"><rect x="1" y="1" width="20" height="8" fill="#ccc" /><path d="M5 1v3M9 1v3M13 1v3M17 1v3" /><circle cx="3.500" cy="16" r="2" /><circle cx="18.500" cy="16" r="2" /></svg>
);
const ScaleIcon = (
  <svg width="19" height="20" viewBox="0 0 19 20" aria-hidden="true"><path d="M1 6l5-5h12v13l-5 5H1z" fill="#f3c95a" stroke="#6b4510" strokeWidth="1.500" /><path d="M5 14h7V6M5 14l3-3" fill="none" stroke="#fff6d0" strokeWidth="1.500" /><path d="M13 5v8" stroke="#6b4510" strokeWidth="1.500" /><circle cx="13" cy="15" r="2.500" fill="#e0a020" stroke="#6b4510" /></svg>
);
const AreaIcon = <span className="font-['Liberation_Serif',serif] text-[22px] font-bold italic leading-none text-black">m²</span>;
const RotateIcon = (
  <svg width="20" height="20" viewBox="0 0 20 20" aria-hidden="true"><path d="M18 3C10-1 1 1 2 5c1 3 6 3 11 2" fill="none" stroke="#111" strokeWidth="2.500" /><path d="M11 3l6 4-6 3z" fill="#111" /><path d="M4 12h12l4 7H0z" fill="#e8882a" stroke="#7a3e0c" /><path d="M10 12v7M2 15h16" stroke="#f7c27a" /></svg>
);

const remapSkin = "border-[#4b4b55] bg-gradient-to-b from-[#a9a8b6] to-[#8b8a98] text-[#222]";
const plainSkin = "border-[#555] bg-gradient-to-b from-[#e6e6e6] to-[#c4c4c4] text-[#333]";
const greenSkin = "border-[#2f4d12] bg-gradient-to-b from-[#b2f26a] to-[#97d450] text-[#28400f]";

const remapIn = ["data", "Min", "Max"];
const nodes = [
  { x: 1474, y: 601, w: 138, h: 48, i: ["Point A", "Point B"], o: ["Distance"], icon: DistanceIcon, skin: plainSkin },
  { x: 1527, y: 775, w: 122, h: 69, i: remapIn, o: ["Mapped"], icon: RemapIcon, skin: remapSkin },
  { x: 1527, y: 878, w: 122, h: 69, i: remapIn, o: ["Mapped"], icon: RemapIcon, skin: remapSkin },
  { x: 1527, y: 981, w: 122, h: 69, i: remapIn, o: ["Mapped"], icon: RemapIcon, skin: remapSkin },
  { x: 1523, y: 1097, w: 122, h: 70, i: remapIn, o: ["Mapped"], icon: RemapIcon, skin: remapSkin },
  { x: 1687, y: 805, w: 159, h: 112, i: ["Geometry", "Plane", "Scale X", "Scale Y", "Scale Z"], o: ["Geometry", "Transform"], icon: ScaleIcon, skin: plainSkin },
  { x: 1275, y: 1295, w: 153, h: 48, i: ["Geometry"], o: ["Area", "Centroid"], icon: AreaIcon, skin: plainSkin },
  { x: 2130, y: 1047, w: 177, h: 69, i: ["Geometry", "Angle", "Plane"], o: ["Geometry", "Transform"], icon: RotateIcon, skin: greenSkin, lead: true },
];

const tags = [
  [1542, 565, "Distance"], [1587, 739, "Remap+"], [1587, 843, "Remap+"], [1587, 946, "Remap+"], [1582, 1062, "Remap+"],
  [1766, 769, "Scale NU"], [1351, 1259, "Area"], [1528, 1422, "Scale"], [2218, 1011, "Rotate"],
];

const sliders = [
  { y: 778, v: 14, end: 1379, t: "0.14", k: 1275, side: "r" },
  { y: 828, v: 99, end: 1378, t: "0.99", k: 1367, side: "l" },
  { y: 878, v: 23, end: 1378, t: "0.23", k: 1284, side: "r" },
  { y: 929, v: 74, end: 1378, t: "0.74", k: 1339, side: "l" },
  { y: 978, v: 1, end: 1379, t: "0.01", k: 1261, side: "r" },
  { y: 1029, v: 99, end: 1379, t: "0.99", k: 1368, side: "l" },
  { y: 1104, v: 0, end: 1377, t: "0", k: 1258, side: "r" },
  { y: 1163, v: 58, end: 1371, t: "237", k: 1323, side: "l" },
];

const Node = ({ n }) => (
  <div className={`absolute flex items-stretch gap-2 rounded-[4px] border-2 text-[11px] leading-none ${n.lead ? "pl-[22px]" : "pl-[5px]"} ${n.skin}`} style={{ left: n.x - OX, top: n.y - OY, width: n.w, height: n.h }}>
    {n.lead && <span className="absolute left-[2px] top-[24px] flex h-[16px] w-[15px] items-center justify-center rounded-[3px] border border-[#444] bg-[#d6d6d6] text-[10px]">@</span>}
    <div className="flex flex-col items-end justify-around">{n.i.map((t) => <span key={t}>{t}</span>)}</div>
    <div className="flex items-center">{n.icon}</div>
    <div className="flex flex-col items-start justify-around">{n.o.map((t) => <span key={t}>{t}</span>)}</div>
  </div>
);

const Tag = ({ x, y, t }) => (
  <div className="absolute -translate-x-1/2" style={{ left: x - OX, top: y - OY }}>
    <div className="h-[20px] whitespace-nowrap border-2 border-[#3a3a3a] bg-gradient-to-b from-white to-[#d8d8d8] px-1 text-[11px] leading-[15px] text-[#333]">{t}</div>
    <svg className="absolute left-1/2 top-[17px] -translate-x-1/2" width="12" height="9" viewBox="0 0 12 9" aria-hidden="true"><path d="M0 1h12L6 8z" fill="#d8d8d8" /><path d="M0 2l6 6 6-6" fill="none" stroke="#3a3a3a" strokeWidth="1.500" /></svg>
  </div>
);

const Slider = ({ s }) => {
  const label = s.side === "r" ? { left: s.k - OX + 7 } : { right: s.end - s.k + 5 };
  return (
    <div className="absolute h-[22px] rounded-r-[4px] border-2 border-l-0 border-[#555] bg-gradient-to-b from-[#ececec] to-[#c6c6c6]" style={{ left: 0, top: s.y - 11 - OY, width: s.end - OX }}>
      {s.t !== "237" && <span className="absolute left-0 top-0 h-full w-[7px] border-r-2 border-[#555] bg-[#9d9cab]" />}
      <svg className="absolute left-[15px] top-[4px]" width="114" height="10" viewBox="0 0 114 10" fill="none" stroke="#a9a9a9" aria-hidden="true"><path d="M1 6H113M1 0V6M12 2V6M23 2V6M34 2V6M45 2V6M57 0V6M68 2V6M79 2V6M90 2V6M101 2V6M112 0V6" /></svg>
      <input type="range" min="0" max="100" defaultValue={s.v} aria-label={`Number slider ${s.t}`} className="absolute inset-0 w-full appearance-none opacity-0" />
      <span className="absolute top-[5px] size-[9px] rounded-full border-[2.5px] border-black bg-white" style={{ left: s.k - OX - 4 }} />
      <span className="absolute top-[3px] bg-[#dadada] text-[11px] leading-[12px] text-[#444]" style={label}>{s.t}</span>
    </div>
  );
};

const Canvas = () => (
  <div className="relative ml-px mr-[3px] min-h-0 flex-1 overflow-hidden bg-[#d3cfc7]">
    <svg className="absolute left-0 top-0" width="1316" height="950" viewBox="1242 502 1316 950" aria-hidden="true">
      <path d={range(9).map((i) => `M${1396 + i * 161.6} 502V1452`).join("")} stroke="#b8b4ad" />
      <path d={range(18).map((i) => `M1242 ${508.5 + i * 53.85}H2558`).join("")} stroke="#b8b4ad" />
      <rect x="1200" y="756" width="189.500" height="295" fill="#b6a5e0" stroke="#9d8ccb" />
      <rect x="1200" y="1071" width="198" height="114" fill="#b6a5e0" stroke="#9d8ccb" />
      <rect x="1200" y="1082" width="187" height="44" fill="#aa90ee" stroke="#947dd4" />
    </svg>
    {tags.map((t, i) => <Tag key={i} x={t[0]} y={t[1]} t={t[2]} />)}
    <svg className="absolute left-0 top-0" width="1316" height="950" viewBox="1242 502 1316 950" fill="none" aria-hidden="true">
      <g strokeWidth="3.5">
        <path d={smooth(greenWire)} stroke="#91cc4e" />
        <path d={link(1648, 1132, 2130, 1081)} stroke="url(#wireB)" />
        <path d={link(1848, 834, 2130, 1060)} stroke="url(#wireA)" />
      </g>
      <g stroke="#000" strokeOpacity=".62" strokeWidth="3">
        {wires.map((w, i) => <path key={i} d={smooth(w)} />)}
        {sliderLinks.map((l, i) => <path key={"s" + i} d={link(...l)} />)}
      </g>
      <g stroke="#000" strokeWidth="3.5" strokeLinecap="round">
        <path d="M1240 1262Q1248 1262 1252 1269L1274 1299L1267 1301M1258 1292L1282 1281" />
        <path d="M1243 1385V1374Q1252 1370 1256 1364M1254 1381L1267 1379Q1276 1370 1267 1368Q1259 1374 1260 1388Q1266 1400 1276 1391L1278 1382" />
      </g>
      <path d="M1242 1451H1402" stroke="#222" strokeWidth="2" />
      {ports.map((p, i) => <circle key={i} cx={p[0]} cy={p[1]} r="4.500" fill="#fff" stroke="#000" strokeWidth="2.200" />)}
      <circle cx="2506" cy="1447" r="34" fill="url(#paper)" stroke="#fff" strokeWidth="3" />
      <circle cx="2506" cy="1447" r="36" stroke="#333" strokeWidth="1.500" />
      <path d="M2469 1456A38 38 0 0 1 2504 1410" stroke="#000" strokeWidth="6" />
      <path d="M2476 1400l12 7-1 7-11-1zM2500 1408l6 1" fill="#000" stroke="#000" />
      <path d="M2484 1422l10-4 0 11zM2525 1436l6-10 6 10z" fill="#fff" />
    </svg>
    <div className={`absolute flex flex-col justify-around rounded-r-[4px] border-2 border-l-0 pl-[5px] text-[11px] leading-none ${plainSkin}`} style={{ left: 0, top: 597 - OY, width: 71, height: 68 }}>
      <span>Point</span><span>Parameter</span><span>Distance</span>
    </div>
    {nodes.map((n, i) => <Node key={i} n={n} />)}
    {sliders.map((s, i) => <Slider key={i} s={s} />)}
  </div>
);

/* ---------- Grasshopper window ---------- */

const ghTabs = ["Math", "Set", "Vec", "Crv", "Srf", "Msh", "Int", "Trns", "Dis", "PO"];
const ghLetters = ["D", "D", "E", "P", "A", "I", "P", "K", "R", "H", "L", "L", "H"];

const WinButton = ({ label, d, cls = "" }) => (
  <button type="button" aria-label={label} className={`flex h-full w-20 items-center justify-center ${cls}`}>
    <svg width="16" height="16" viewBox="0 0 16 16" fill="none" stroke="currentColor" strokeWidth="1.600" aria-hidden="true"><path d={d} /></svg>
  </button>
);

const Capsule = ({ fill, stroke = "#333", hole = "#555", extra }) => (
  <Svg s={41}>
    <path d="M9 7L17 2c6-1 11 5 11 11l-5 12c-3 5-8 6-12 3l-6-6c-3-3-1-8 4-15z" fill={fill} stroke={stroke} strokeWidth="1.200" />
    <ellipse cx="21" cy="9" rx="6.500" ry="4" transform="rotate(48 21 9)" fill={hole} stroke={stroke} strokeWidth="1" />
    {extra}
  </Svg>
);

const Sep = () => <span className="mx-[8px] h-10 w-px bg-[#b5b5b5]" />;
const Caret = () => <svg width="10" height="6" viewBox="0 0 10 6" aria-hidden="true"><path d="M0 0h9L4.500 5z" fill="#111" /></svg>;
const IconBtn = ({ label, children, cls = "" }) => <button type="button" aria-label={label} className={`flex h-[47px] items-center justify-center ${cls}`}>{children}</button>;

const Grasshopper = () => (
  <div className="absolute bottom-0 left-[1240px] right-[146px] top-[159px] flex flex-col overflow-hidden rounded-t-[14px] border border-b-0 border-[#9c9c9c] bg-[#f0f0f0] font-['Open_Sans','Noto_Sans',sans-serif] shadow-[0_10px_70px_rgba(0,0,0,0.38)]">
    <header className="flex h-[51px] shrink-0 items-center bg-gradient-to-r from-[#f8f0e6] via-[#f7eef0] to-[#f6eff1] pb-[2px] text-[20px] text-[#222]">
      <h2 className="flex-1 pl-[12px]">Grasshopper - 1</h2>
      <WinButton label="Minimize" d="M1 8h14" />
      <WinButton label="Maximize" d="M1.500 1.500h13v13h-13z" />
      <WinButton label="Close" d="M1 1l14 14M15 1L1 15" />
    </header>
    <nav className="flex h-12 shrink-0 items-center bg-gradient-to-r from-[#f1f1f1] to-[#fcfcfc] pl-[4px] pr-[15px] pt-[2px] text-[20px] text-black">
      {["File", "Edit", "View", "Display", "Solution", "Help"].map((m) => <button key={m} type="button" className="px-[16px]">{m}</button>)}
      <span className="ml-auto">1</span>
    </nav>
    <div className="flex h-[38px] shrink-0 items-stretch pr-[24px] font-['Liberation_Sans',sans-serif] text-[18px] text-[#777]">
      <button type="button" className="w-[61px] rounded-t-[8px] border border-b-0 border-[#999] bg-white pb-[4px] text-black">Prm</button>
      {ghTabs.map((t) => <button key={t} type="button" className="min-w-[49px] px-[15px]">{t}</button>)}
      <div className="flex flex-1">{ghLetters.map((t, i) => <button key={i} type="button" className="flex-1">{t}</button>)}</div>
    </div>
    <div className="flex h-[152px] shrink-0 items-start gap-[7px] border-t-2 border-[#b0b0b0] bg-gradient-to-b from-[#d4d4d4] via-[#ececec] to-[#f1f1f1] pl-[6px] pt-[3px] font-['Liberation_Sans',sans-serif]">
      {ribbon.map((p) => <RibbonPanel key={p[0]} name={p[0]} width={p[1]} groups={p[2]} />)}
    </div>
    <div className="ml-px mr-[3px] flex h-[53px] shrink-0 items-center border-t-2 border-[#6d6d6d] bg-gradient-to-b from-[#fdfdfd] to-[#f1f1f1] pb-[2px]">
      <IconBtn label="Open" cls="ml-[4px] w-[40px]"><svg width="36" height="40" viewBox="0 0 36 40" strokeLinejoin="round" aria-hidden="true"><path d="M5 14V2h15l2 5h6v9" fill="#eee" stroke="#666" strokeWidth="1.500" /><path d="M1 38V16h10l4-3h20v25z" fill="#7cc04a" stroke="#3f7a20" strokeWidth="2" /></svg></IconBtn>
      <IconBtn label="Save" cls="ml-[10px] w-[44px]"><svg width="40" height="40" viewBox="0 0 40 40" aria-hidden="true"><path d="M1 1h38v38H5l-4-4z" fill="#2b66d9" stroke="#17357c" strokeWidth="2" /><rect x="8" y="2" width="24" height="16" fill="#e5edf5" stroke="#9ab" /><rect x="9" y="24" width="20" height="15" fill="#b5b9c2" stroke="#223" /><rect x="12" y="27" width="6" height="9" fill="#2b66d9" /></svg></IconBtn>
      <Sep />
      <div className="relative ml-[-2px] h-[38px] w-[255px]">
        <select aria-label="Zoom" defaultValue="76%" className="h-full w-full appearance-none border border-[#777] bg-white pl-[3px] text-[20px] text-black">
          <option>76%</option>
        </select>
        <svg className="pointer-events-none absolute right-[8px] top-[16px]" width="13" height="8" viewBox="0 0 13 8" aria-hidden="true"><path d="M1 1l5.500 5.500L12 1" fill="none" stroke="#555" strokeWidth="1.500" /></svg>
      </div>
      <IconBtn label="Zoom extents" cls="ml-[8px] w-[42px]"><svg width="40" height="40" viewBox="0 0 40 40" fill="none" stroke="#111" strokeWidth="6" aria-hidden="true"><path d="M3 15V3h12M25 3h12v12M37 25v12H25M15 37H3V25" /><path d="M16 16l8 8M24 16l-8 8" strokeWidth="3.500" /></svg></IconBtn>
      <span className="w-[32px] pl-[12px]"><Caret /></span>
      <IconBtn label="Preview" cls="w-[40px]"><svg width="38" height="28" viewBox="0 0 38 28" aria-hidden="true"><path d="M1 14C9 2 28 2 37 14 28 26 9 26 1 14z" fill="#f4f8fb" stroke="#446" strokeWidth="2" /><circle cx="19" cy="13" r="10" fill="#57b1e0" stroke="#1c5f8e" /><circle cx="19" cy="13" r="5" fill="#0a1830" /><circle cx="22" cy="10" r="2" fill="#fff" /></svg></IconBtn>
      <span className="w-[28px] pl-[11px]"><Caret /></span>
      <IconBtn label="Sketch" cls="w-[42px]"><svg width="40" height="38" viewBox="0 0 40 38" aria-hidden="true"><path d="M3 10C11 15 0 27 5 34c5 4 9 0 12-5" fill="none" stroke="#5a1c12" strokeWidth="3" /><path d="M16 26C17 15 27 7 36 2c2 10-2 19-12 28z" fill="#e04a3c" stroke="#9c3020" /><path d="M14 35l2-9 8 5z" fill="#d9a637" stroke="#54300c" /></svg></IconBtn>
      <div className="ml-auto flex items-center">
        <IconBtn label="No preview" cls="w-[50px]"><Svg s={41}><path d="M9 10L15 3c5-2 9 3 9 8l-3 8H8c-2-3-1-6 1-9z" fill="#ddd" stroke="#999" /><path d="M4 22c4-6 20-6 24 0-3 10-21 10-24 0z" fill="#333" /><path d="M5 21c4-6 18-6 22 0" stroke="#aaa" /></Svg></IconBtn>
        <IconBtn label="Wireframe" cls="w-[50px]"><Capsule fill="#eee" hole="#fff" stroke="#444" extra={<ellipse cx="11" cy="21" rx="7" ry="5" transform="rotate(48 11 21)" fill="#fff" stroke="#777" strokeWidth="1.200" />} /></IconBtn>
        <IconBtn label="Shaded" cls="w-[48px] border-2 border-[#2f7fe0] bg-white"><Capsule fill="url(#redTube)" hole="#7a120c" stroke="#5e0c08" /></IconBtn>
        <Sep />
        <IconBtn label="Selected preview" cls="ml-[8px] w-[46px]"><Svg s={41}><path d="M11 3L20 1c5 0 8 6 7 11l-5 13c-2 4-6 4-9 2l-5-2c5-3 5-8 4-13z" fill="url(#tealTube)" stroke="#145050" strokeWidth="1.200" /><ellipse cx="21" cy="8" rx="5" ry="4" transform="rotate(48 21 8)" fill="#1c6060" stroke="#145050" strokeWidth="1" /><path d="M2 3c8 0 10 5 8 11s-3 12 11 16" stroke="#333" /></Svg></IconBtn>
        <IconBtn label="Document preview" cls="w-[46px]"><Capsule fill="#6fa52c" hole="#3c6b12" stroke="#2c4c0c" extra={<><path d="M6 12l16 14c-3 5-8 5-11 2l-6-6c-2-3-1-6 1-10z" fill="#eee" stroke="#777" /><path d="M3 6l23 23" strokeWidth="2" /></>} /></IconBtn>
        <IconBtn label="Preview quality" cls="w-[46px]"><Svg s={41}><path d="M16 2a12 13 0 0 0 0 26z" fill="#e0852a" stroke="#7a3c0c" /><path d="M16 2a12 13 0 0 1 0 26z" fill="#e2e2e2" stroke="#777" /></Svg></IconBtn>
        <Sep />
        <IconBtn label="Mesh settings" cls="w-[36px]"><Svg s={38}><path d="M16 3l9 3 4 9-3 9-9 5-9-3-5-9 3-9z" fill="url(#sky)" stroke="#27439c" strokeWidth="1.800" /></Svg></IconBtn>
        <span className="w-[20px] pl-[7px]"><Caret /></span>
      </div>
    </div>
    <Canvas />
  </div>
);

/* ---------- Rhino window ---------- */

const menu = ["File", "Edit", "View", "Curve", "Surface", "SubD", "Solid", "Mesh", "Dimension", "Transform", "Tools", "Analyze", "Render", "Panels", "Paneling Tools", "SectionTools", "VisualARQ", "Help"];
const toolTabs = ["CPlanes", "Set View", "Display", "Select", "Viewport Layout", "Visibility", "Transform", "Curve Tools", "Surface Tools"];
const snaps = [["End", 1], ["Near", 0], ["Point", 1], ["Mid", 1], ["Cen", 1], ["Int", 1], ["Perp", 1], ["Tan", 0], ["Quad", 1], ["Knot", 0], ["Vertex", 1]];
const swatches = ["bg-black", "bg-[#ab2118]", "bg-[#6a2ab5]", "bg-[#0000e0]", "bg-[#2f741f]", "bg-[#f3f3f3]"];

const Snap = ({ name, on }) => (
  <label className="flex items-center gap-[6px]">
    <span className="relative flex size-[18px]">
      <input type="checkbox" defaultChecked={!!on} className="peer size-[18px] appearance-none rounded-[4px] border-2 border-[#888] bg-[#f6f6f6] checked:border-[#245cb5] checked:bg-[#245cb5]" />
      <svg className="pointer-events-none absolute left-[4px] top-[5px] hidden peer-checked:block" width="10" height="8" viewBox="0 0 10 8" aria-hidden="true"><path d="M1 4l3 3 5-6" fill="none" stroke="#fff" strokeWidth="1.300" /></svg>
    </span>
    {name}
  </label>
);

const Gear = ({ className }) => (
  <svg className={`absolute ${className}`} width="26" height="26" viewBox="0 0 26 26" fill="none" stroke="currentColor" strokeWidth="3" aria-hidden="true"><circle cx="13" cy="13" r="9" /><circle cx="13" cy="13" r="12" strokeDasharray="4 5" /></svg>
);

const RightPanel = () => (
  <aside className="relative mb-[15px] mt-[6px] flex w-[200px] shrink-0 flex-col overflow-hidden border-b-2 border-t-2 border-[#c9d2e3] bg-[#e9ebf0] text-[20px] text-[#444]">
    <div className="relative h-[43px] shrink-0 border-b border-t border-[#c5cfe2]"><Gear className="left-[194px] top-[13px] text-[#b9c5dd]" /></div>
    <div className="flex h-[65px] shrink-0 items-center gap-[7px] border-b border-[#c5cfe2] pl-[54px] pt-[4px]">
      <button type="button" aria-label="Back" className="w-[29px] pl-[4px]"><svg width="18" height="26" viewBox="0 0 18 26" aria-hidden="true"><path d="M1 13L16 1v24z" fill="#999" stroke="#888" /></svg></button>
      <button type="button" aria-label="Filter" className="relative h-[28px] w-[29px]"><Svg s={26}><path d="M2 2h24l-9 13v14l-6-4V15z" fill="#5472e0" /></Svg><Corner cls="bg-black" /></button>
      <button type="button" aria-label="Page" className="relative h-[28px] w-[29px]"><Svg s={26}><path d="M3 2h15l6 6v22H3z" fill="#bcbcbc" stroke="#999" /></Svg><Corner cls="bg-[#aaa]" /></button>
      <button type="button" aria-label="Tools" className="relative h-[28px] w-[29px]"><Svg s={28}><path d="M4 27L17 11" stroke="#1e3ba0" strokeWidth="6" /><path d="M12 3c6-3 11 0 12 4l6 6-4 4-5-5-8-4z" fill="#888" /></Svg><Corner cls="bg-black" /></button>
    </div>
    <table className="w-full shrink-0 border-collapse bg-white text-left">
      <thead>
        <tr className="h-[34px]">
          <th className="w-[81px]" aria-label="Colour" />
          <th className="border-x border-[#d8dce8] pl-[8px] pt-[2px] font-normal leading-none">Material</th>
          <th className="w-[6px]" aria-label="More" />
        </tr>
      </thead>
      <tbody>
        {swatches.map((c) => (
          <tr key={c} className="h-[34px] border-b border-[#e6e8f0]">
            <td className="pl-[54px]"><span className={`block size-[23px] border-2 border-[#333] ${c}`} /></td>
            <td className="pl-[5px]"><span className="block size-[25px] rounded-full bg-[#f9f9f9]" /></td>
            <td />
          </tr>
        ))}
      </tbody>
    </table>
    <div className="h-[103px] shrink-0 bg-white" />
    <div className="h-[29px] shrink-0 border-b-2 border-[#c5cfe2] bg-[#eeeeee] pl-[54px] pt-[10px]"><span className="block h-[9px] w-[11px] bg-[#777]" /></div>
    <div className="mt-[5px] h-[19px] shrink-0 border-b border-t border-[#c5cfe2]" />
    <div className="relative mt-[2px] flex h-[55px] shrink-0 items-end border-t border-[#c5cfe2]">
      <button type="button" aria-label="Help" className="flex h-[40px] w-[126px] items-center justify-center border-b-2 border-[#c5cfe2] pl-[64px]"><svg width="26" height="26" viewBox="0 0 26 26" aria-hidden="true"><rect x="1" y="1" width="24" height="24" fill="#fff" stroke="#444" strokeWidth="2" /><path d="M2 2h22v4H2z" fill="#2d3f8a" /><path d="M3 23c0-18 20-18 20 0z" fill="#3d5bd0" /><text x="13" y="21" textAnchor="middle" fill="#fff" fontWeight="bold" fontSize="14">?</text></svg></button>
      <button type="button" aria-label="Camera" className="flex h-[40px] w-[55px] items-center justify-center border-x-2 border-t-2 border-[#c5cfe2] pr-[6px]"><svg width="26" height="22" viewBox="0 0 26 22" aria-hidden="true"><path d="M1 6h6l2-4h8l2 4h6v14H1z" fill="#1a1a1a" /><circle cx="14" cy="12" r="6.500" fill="#333" stroke="#bbb" strokeWidth="1.500" /><circle cx="14" cy="12" r="2.500" fill="#5a8a6a" /></svg></button>
      <span className="flex-1 border-b-2 border-[#c5cfe2]" />
      <Gear className="left-[194px] top-[26px] text-[#b9c5dd]" />
    </div>
    <div className="flex h-[58px] shrink-0 items-center gap-[12px] border-b-2 border-[#b5b5b5] pl-[50px]">
      <button type="button" aria-label="Open"><Svg s={26}>{topIcons[1][2]}</Svg></button>
      <button type="button" aria-label="Pick"><Svg s={26}><path d="M1 8h7M12 8h5M10 0v5M10 11v8" strokeWidth="2.500" /><path d="M14 8l14 15-7 0 3 7-4 1-3-6-4 4z" fill="#eee" /></Svg></button>
      <button type="button" aria-label="Point at"><Svg s={26}><path d="M2 20L14 9h14v12H16l-4-3z" fill="#b9b9b9" stroke="#aaa" /></Svg></button>
      <button type="button" aria-label="Duplicate"><Svg s={26}><rect x="2" y="2" width="21" height="21" rx="4" fill="#ccc" stroke="#aaa" /><rect x="9" y="9" width="21" height="21" rx="4" fill="#c4c4c4" stroke="#999" /></Svg></button>
    </div>
    <p className="flex h-[260px] shrink-0 items-center justify-end whitespace-nowrap border-b-2 border-[#999] pr-[5px] pt-[2px]">have been saved</p>
    <ul className="flex flex-col whitespace-nowrap pt-[9px] text-right leading-[35px]">
      <li className="pr-[82px]">thumbnails</li>
      <li className="pr-[125px]">ratio</li>
      <li className="pr-[72px] text-[#888]">view widget</li>
      <li className="mt-[36px] pr-[5px]">and view widgets</li>
    </ul>
  </aside>
);

export default function App() {
  return (
    <div className="relative h-screen w-full overflow-hidden bg-white pl-[10px] pt-[14px] font-['Open_Sans','Noto_Sans',sans-serif] text-[20px] leading-none text-[#333]">
      <Defs />
      <div className="flex h-full flex-col bg-[#e9ebf0]">
        <header className="flex h-10 shrink-0 items-center bg-[#f3f3f3] text-[#999]">
          <svg className="ml-[3px]" width="29" height="29" viewBox="0 0 29 29" aria-hidden="true"><rect width="29" height="29" fill="#0c0c0c" /><path d="M2 1c2 2 2 6 3 9 3 0 4 5 8 5 5-1 7-8 8-13l3-1c0 6 0 10-3 14 3 1 2 5 0 8l-5 3c-5-2-8-6-11-9C2 13 1 8 2 1z" fill="#cfcfcf" /><path d="M5 3l2 9M12 22c3 0 5-2 6-5M22 3l-3 9" stroke="#fff" strokeWidth="2" fill="none" /><path d="M8 16c2 3 5 4 8 3" stroke="#444" strokeWidth="1.500" fill="none" /></svg>
          <h1 className="flex-1 pl-[9px] pt-[2px]">1 (86 KB) - Rhino 7 Educational - [Top]</h1>
          <div className="-mr-[18px] flex h-full text-[#888]">
            <WinButton label="Minimize" d="M1 8h14" />
            <WinButton label="Restore" d="M1 4.500h10.500v10.500H1zM4 4.500V1h10.500v11h-3" />
            <WinButton label="Close" d="M1 1l14 14M15 1L1 15" />
          </div>
        </header>
        <nav className="flex h-[33px] shrink-0 items-center gap-[25px] bg-white pb-[2px] pl-[16px] pt-[5px] text-[#777]">
          {menu.map((m) => <button key={m} type="button" className="shrink-0">{m}</button>)}
        </nav>
        <div className="flex h-[124px] shrink-0 border-b border-[#c9d2e3] pb-[4px] pt-[6px]">
          <span className="ml-[6px] mr-[2px] w-[4px] border-x border-[#c9cede]" />
          <div className="flex min-w-0 flex-1 flex-col bg-white text-black">
            <div className="flex">
              <div className="flex h-[79px] flex-1 flex-col justify-end overflow-hidden whitespace-pre pl-[2px] leading-7">
                <p>Point location ( Type=Coordinate )</p>
                <p>1 point, 1 curve added to selection.</p>
                <p>Command: _Delete</p>
              </div>
              <span className="w-[9px] bg-[#f0f0f0]" />
            </div>
            <label className="flex flex-1 items-center border-t-2 border-[#ccd1e4] pb-[3px] pl-[2px] font-bold">
              Command:
              <input type="text" className="ml-1 h-full min-w-0 flex-1 bg-transparent font-normal outline-none" />
              <span className="flex w-[9px] flex-col gap-[2px]"><span className="h-[14px] border border-r-0 border-[#aaa] bg-[#f0f0f0]" /><span className="h-[14px] border border-r-0 border-[#aaa] bg-[#f0f0f0]" /></span>
            </label>
          </div>
        </div>
        <div className="flex h-[99px] shrink-0">
          <span className="mb-[7px] ml-[6px] mr-[2px] mt-[6px] w-[4px] border-x border-[#c9cede]" />
          <div className="flex flex-1 flex-col">
            <div className="relative flex h-[39px] items-end overflow-hidden">
              <button type="button" className="h-[33px] w-[128px] shrink-0 rounded-tl-[10px] rounded-tr-[4px] border border-b-0 border-[#c5cfe2] pt-[2px]">Standard</button>
              <div className="flex h-full flex-1 items-center border-b border-[#c5cfe2] pt-[8px]">
                {toolTabs.map((t) => <button key={t} type="button" className="shrink-0 px-[21px]">{t}</button>)}
              </div>
              <Gear className="right-[-23px] top-[10px] text-[#aaa]" />
            </div>
            <div className="flex h-[40px] w-[1226px] pt-px">
              {topIcons.map((t) => <ToolButton key={t[0]} item={t} className="flex-1" />)}
            </div>
          </div>
        </div>
        <div className="flex min-h-0 flex-1">
          <nav aria-label="Tools" className="w-[91px] shrink-0 px-[3px]">
            <div className="mx-[3px] mb-[3px] mt-[5px] h-[4px] border-y border-[#c9cede]" />
            <div className="grid h-[714px] auto-rows-fr grid-cols-2 pr-[6px]">
              {sideIcons.map((t) => <ToolButton key={t[0]} item={t} className="mr-[2px]" />)}
            </div>
          </nav>
          <div className="flex min-w-0 flex-1 flex-col">
            <div className="relative min-h-0 flex-1 overflow-hidden border-b-2 border-l border-t-2 border-[#c3cadb] bg-[#9da3a9]">
              <Viewport />
              <button type="button" className="relative flex h-[22px] w-[82px] items-center bg-[#8c9dea] pl-[12px] text-[20px] font-bold text-[#222]">
                Top
                <span className="ml-[12px] h-[19px] w-px bg-[#222]" />
                <svg className="ml-[3px]" width="12" height="6" viewBox="0 0 12 6" aria-hidden="true"><path d="M0 0h12L6 5z" fill="#222" /></svg>
              </button>
            </div>
            <div className="flex h-[46px] shrink-0 items-start leading-[36px]">
              <button type="button" className="h-[36px] w-[64px] rounded-bl-[16px] rounded-br-[4px] border border-t-0 border-[#bfc8dc] bg-[#eceef3] pl-[4px]">Top</button>
              {["Perspective", "Front", "Right", "Layouts"].map((t) => <button key={t} type="button" className="px-[12px]">{t}</button>)}
              <button type="button" aria-label="Add layout" className="ml-[14px] pt-[10px]"><svg width="18" height="18" viewBox="0 0 18 18" aria-hidden="true"><path d="M7 1h4v6h6v4h-6v6H7v-6H1V7h6z" fill="#fff" stroke="#888" strokeWidth="1.500" /></svg></button>
            </div>
          </div>
          <RightPanel />
        </div>
        <div className="flex h-[28px] shrink-0 overflow-hidden">
          <span className="ml-[6px] mr-[5px] w-[4px] shrink-0 border-x border-[#c9cede]" />
          <div className="flex h-[33px] items-center gap-[12px]">
            {snaps.map((s) => <Snap key={s[0]} name={s[0]} on={s[1]} />)}
            <label className="flex items-center gap-[8px]"><input type="checkbox" className="size-[17px] appearance-none rounded-[5px] border-2 border-[#4f86c6] bg-[radial-gradient(circle,#888_0_4px,#d9e4f5_5px)]" />Project</label>
            <label className="ml-[14px] flex items-center gap-[8px]"><input type="checkbox" className="size-[16px] appearance-none rounded-[6px] border border-[#ddd] bg-white" />Disable</label>
          </div>
        </div>
        <footer className="flex h-[26px] shrink-0 overflow-hidden border-t-2 border-[#c3cbe0] leading-[30px]">
          <button type="button" className="h-[30px] w-[84px] border-r-2 border-[#c3cbe0] pl-[9px] text-left">CPlane</button>
          <span className="w-[151px] border-r-2 border-[#c3cbe0] text-center">x 14.14</span>
          <span className="w-[151px] border-r-2 border-[#c3cbe0] text-center">y 3.54</span>
          <span className="w-[151px] border-r-2 border-[#c3cbe0] text-center">z 0.00</span>
          <span className="w-[153px] text-center">Inches</span>
          <button type="button" className="flex h-[30px] w-[292px] items-center gap-[5px] border-r-2 border-[#c3cbe0] pl-[4px]"><span className="size-[21px] bg-black" />Default</button>
          <button type="button" className="h-[30px] w-[113px] border-r-2 border-[#c3cbe0]">Grid Snap</button>
          <button type="button" className="h-[30px] w-[75px] border-r-2 border-[#c3cbe0]">Ortho</button>
          <button type="button" className="ml-[2px] h-[30px] bg-[#d3d9ec] px-[8px] font-bold">Planar</button>
        </footer>
      </div>
      <Grasshopper />
    </div>
  );
}
